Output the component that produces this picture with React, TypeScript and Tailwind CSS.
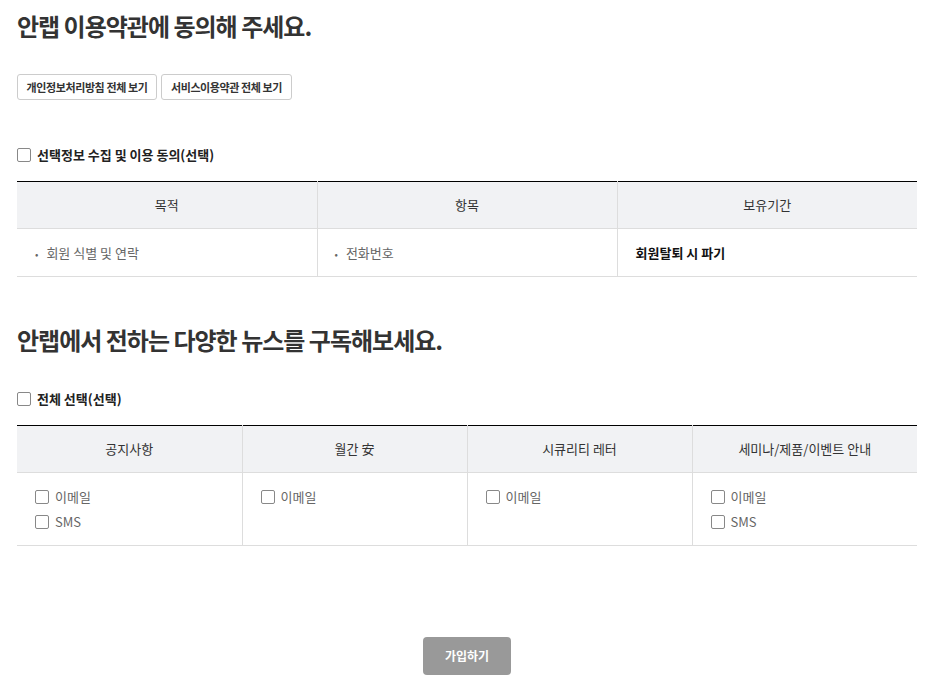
import React from 'react';

const font = { fontFamily: '"Noto Sans CJK KR", "Noto Sans", sans-serif' };

const Box: React.FC = () => (
  <span className="inline-block w-[14px] h-[14px] border border-[#888] rounded-[2px] bg-white shrink-0"></span>
);

const CheckLabel: React.FC<{ label: string; bold?: boolean }> = ({ label, bold }) => (
  <label className="flex items-center gap-[6px] h-[20px]">
    <Box />
    <span className={bold ? 'text-[13px] font-bold text-[#222]' : 'text-[13px] text-[#666]'}>{label}</span>
  </label>
);

const news = [
  { title: '공지사항', opts: ['이메일', 'SMS'] },
  { title: '월간 安', opts: ['이메일'] },
  { title: '시큐리티 레터', opts: ['이메일'] },
  { title: '세미나/제품/이벤트 안내', opts: ['이메일', 'SMS'] },
];

export default function App() {
  return (
    <div className="w-[932px] min-h-[700px] bg-white" style={font}>
      <div className="px-[17px] w-[934px]">
        <h2 className="pt-[9px] text-[24px] leading-[34px] font-bold text-[#333] tracking-[-1px]">
          안랩 이용약관에 동의해 주세요.
        </h2>

        <div className="flex gap-[4px] mt-[31px]">
          <button className="w-[140px] h-[26px] border border-[#ccc] rounded-[3px] text-[11px] font-bold text-[#333] bg-white tracking-[-0.4px]">
            개인정보처리방침 전체 보기
          </button>
          <button className="w-[131px] h-[26px] border border-[#ccc] rounded-[3px] text-[11px] font-bold text-[#333] bg-white tracking-[-0.4px]">
            서비스이용약관 전체 보기
          </button>
        </div>

        <div className="mt-[45px]">
          <CheckLabel label="선택정보 수집 및 이용 동의(선택)" bold />
        </div>

        <table className="w-[900px] mt-[16px] border-t border-t-black border-collapse table-fixed text-[13px]">
          <thead>
            <tr className="bg-[#f1f2f4] h-[47px]">
              <th className="font-normal text-[#333] border-b border-[#ddd]">목적</th>
              <th className="font-normal text-[#333] border-b border-l border-[#ddd]">항목</th>
              <th className="font-normal text-[#333] border-b border-l border-[#ddd]">보유기간</th>
            </tr>
          </thead>
          <tbody>
            <tr className="h-[48px]">
              <td className="border-b border-[#ddd] pl-[18px] text-[#666]">
                <span className="mr-[8px] text-[10px] text-[#666]">•</span>회원 식별 및 연락
              </td>
              <td className="border-b border-l border-[#ddd] pl-[17px] text-[#666]">
                <span className="mr-[8px] text-[10px] text-[#666]">•</span>전화번호
              </td>
              <td className="border-b border-l border-[#ddd] pl-[18px] font-bold text-[#111]">회원탈퇴 시 파기</td>
            </tr>
          </tbody>
        </table>

        <h2 className="mt-[46px] text-[24px] leading-[34px] font-bold text-[#333] tracking-[-1px]">
          안랩에서 전하는 다양한 뉴스를 구독해보세요.
        </h2>

        <div className="mt-[32px]">
          <CheckLabel label="전체 선택(선택)" bold />
        </div>

        <table className="w-[900px] mt-[16px] border-t border-t-black border-collapse table-fixed text-[13px]">
          <thead>
            <tr className="bg-[#f1f2f4] h-[47px]">
              {news.map((n, i) => (
                <th key={n.title} className={'font-normal text-[#333] border-b border-[#ddd]' + (i > 0 ? ' border-l' : '')}>
                  {n.title}
                </th>
              ))}
            </tr>
          </thead>
          <tbody>
            <tr>
              {news.map((n, i) => (
                <td
                  key={n.title}
                  className={'align-top h-[73px] pt-[14px] pb-[10px] pl-[18px] border-b border-[#ddd]' + (i > 0 ? ' border-l' : '')}
                >
                  <div className="flex flex-col gap-[5px]">
                    {n.opts.map((o) => (
                      <CheckLabel key={o} label={o} />
                    ))}
                  </div>
                </td>
              ))}
            </tr>
          </tbody>
        </table>

        <div className="flex justify-center mt-[91px] w-[900px]">
          <button className="w-[88px] h-[38px] bg-[#999] rounded-[4px] text-white text-[12px] font-bold">가입하기</button>
        </div>
      </div>
    </div>
  );
}
